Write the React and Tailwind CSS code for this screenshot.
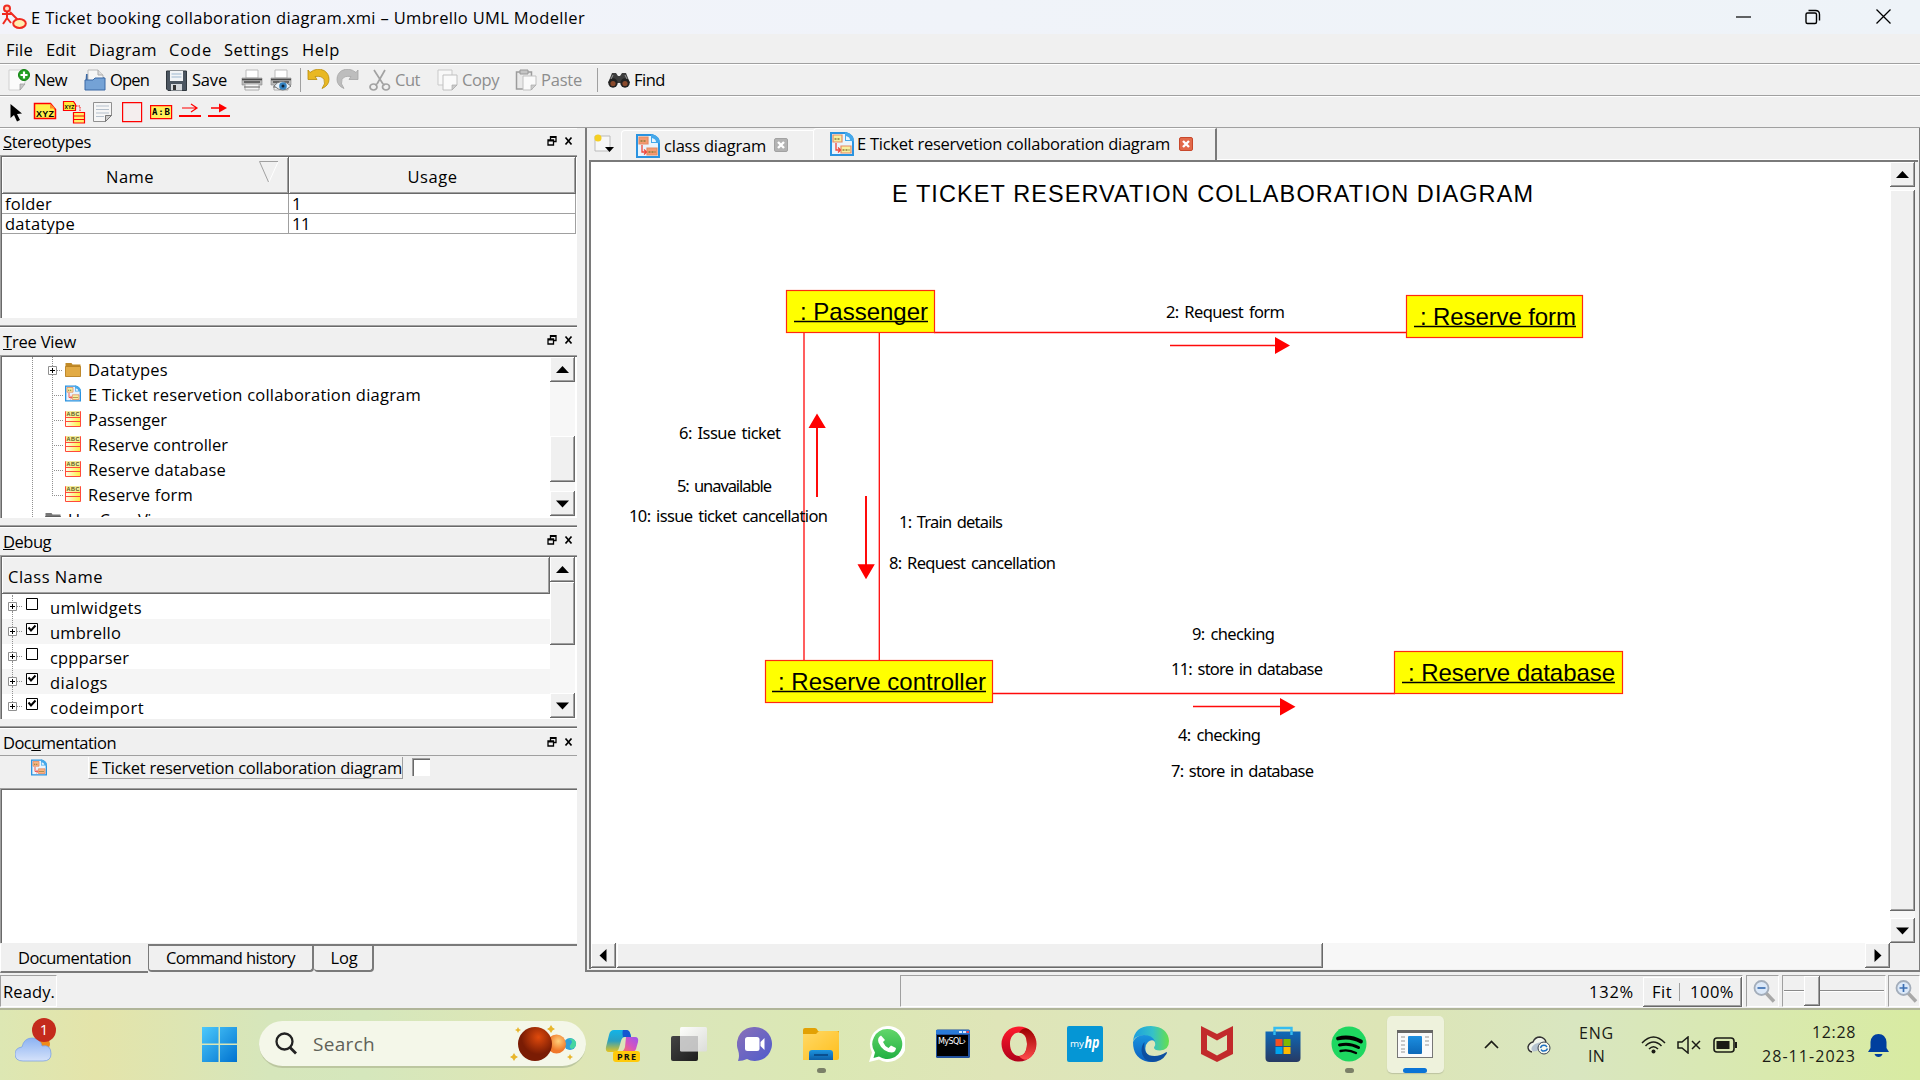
import React, { useLayoutEffect, useRef, useState } from "react";

const raised =
  "bg-[#f0f0f0] shadow-[inset_-1px_-1px_0_#696969,inset_1px_1px_0_#ffffff,inset_-2px_-2px_0_#a0a0a0]";
const sunken =
  "border-t border-l border-[#a0a0a0] shadow-[inset_1px_1px_0_#696969,inset_-1px_-1px_0_#ffffff]";
const well =
  "border-t border-l border-t-[#a0a0a0] border-l-[#a0a0a0] border-r border-b border-r-white border-b-white";

/* Spreads its text over the width that its class gives. */
function Fit({ className = "", children }) {
  const outer = useRef(null);
  const inner = useRef(null);
  const [space, setSpace] = useState(0);
  useLayoutEffect(() => {
    const n = inner.current.textContent.length;
    setSpace((outer.current.clientWidth - inner.current.getBoundingClientRect().width) / n);
  }, []);
  return (
    <span ref={outer} className={`inline-block shrink-0 whitespace-pre ${className}`}>
      <span ref={inner} style={{ letterSpacing: `${space}px` }}>{children}</span>
    </span>
  );
}

function Svg({ className, box, children }) {
  return (
    <svg className={`block shrink-0 ${className}`} viewBox={box} fill="none">
      {children}
    </svg>
  );
}

const Tri = ({ dir }) => (
  <Svg className="w-[25px] h-[25px]" box="0 0 25 25">
    <path
      fill="#000"
      d={{
        up: "M6 16h13L12.500 9z",
        down: "M6 9.500h13L12.500 16.500z",
        left: "M15.500 6v13L8.500 12.500z",
        right: "M9.500 6v13L16.500 12.500z",
      }[dir]}
    />
  </Svg>
);
const ScrollBtn = ({ dir, className = "" }) => (
  <div className={`h-[25px] w-[25px] shrink-0 ${raised} ${className}`}>
    <Tri dir={dir} />
  </div>
);

/* ---------- toolbar icons ---------- */
const AppIcon = () => (
  <Svg className="h-[26px] w-[26px]" box="0 0 26 26">
    <g stroke="#f02a20" strokeWidth="2">
      <circle cx="6" cy="4.500" r="3" fill="#ffd9c0" />
      <path d="M6 8v6M1 10h10M6 14l-4 6M6 14l4 5M9 8l8 8" />
      <ellipse cx="18.500" cy="19.500" rx="6.300" ry="4.500" fill="#ffeeb0" />
    </g>
  </Svg>
);
const NewIcon = () => (
  <Svg className="h-[22px] w-[22px]" box="0 0 22 22">
    <path d="M1 1h16v13l-5 7H1z" fill="#fbfbfb" stroke="#d0d0d0" />
    <path d="M12 21v-6h5z" fill="#c8c8c8" stroke="#999" strokeWidth=".7" />
    <circle cx="16" cy="6" r="5.500" fill="#22a022" stroke="#128012" />
    <path d="M16 2.500v7M12.500 6h7" stroke="#fff" strokeWidth="2.200" />
  </Svg>
);
const OpenIcon = () => (
  <Svg className="h-[22px] w-[22px]" box="0 0 22 22">
    <path d="M2 5h6l2 3h10v12H1z" fill="#3c6aa6" />
    <path d="M4 1h10l5 5v9H4z" fill="#f6f6f6" stroke="#b9b9b9" />
    <path d="M14 1v5h5" fill="#ddd" stroke="#aaa" />
    <path d="M1 11h8l2-2h10v12H1z" fill="#74a2d6" stroke="#3a68a5" />
  </Svg>
);
const SaveIcon = () => (
  <Svg className="h-[21px] w-[21px]" box="0 0 21 21">
    <path d="M.5 1h20v19.500H2L.500 19z" fill="#4b5560" stroke="#2f363d" />
    <path d="M4 1h13v10H4z" fill="#f2f4f6" />
    <path d="M5.500 4h10M5.500 7h10" stroke="#9db7cf" />
    <path d="M5 14h11v6.500H5z" fill="#d5d8dc" />
    <path d="M7 15h3v5H7z" fill="#333" />
  </Svg>
);
const PrintIcon = ({ eye }) => (
  <Svg className="h-[22px] w-[22px]" box="0 0 22 22">
    <path d="M5 1h12v8H5z" fill="#fff" stroke="#bbb" />
    <path d="M1 9h20v7H1z" fill="#b9b9b9" stroke="#888" strokeWidth=".6" />
    <path d="M1 10.500h20M3 13h16" stroke="#4a4a4a" strokeWidth="1.600" />
    <path d="M4 15h14v6H4z" fill="#f4f4f4" stroke="#aaa" />
    <path d="M3 18h16" stroke="#777" strokeWidth="1.200" />
    {eye && (
      <g>
        <path d="M4 17q7-9 17 0q-8 8-17 0z" fill="#e8f1f8" stroke="#777" />
        <circle cx="13" cy="17" r="3.800" fill="#3382c0" />
        <circle cx="13" cy="17" r="1.500" fill="#123" />
      </g>
    )}
  </Svg>
);
const UndoIcon = ({ redo }) => (
  <Svg className={redo ? "h-[20px] w-[23px] -scale-x-100" : "h-[20px] w-[23px]"} box="0 0 23 20">
    <path
      d="M1 1l2 2.500Q10-2 17 1.500q5 3 5 9t-7 9q4-5 2-9t-9-3l2 3H1z"
      fill={redo ? "#bdbdbd" : "#e9b822"}
      stroke={redo ? "#a5a5a5" : "#b98c08"}
      strokeWidth=".8"
    />
  </Svg>
);
const CutIcon = () => (
  <Svg className="h-[22px] w-[22px]" box="0 0 22 22">
    <g stroke="#a2a2a2" strokeWidth="1.700">
      <path d="M5 1l9 14M16 1L8 15" />
      <ellipse cx="4.500" cy="18" rx="3.500" ry="3" />
      <ellipse cx="17" cy="18" rx="3.500" ry="3" />
      <path d="M8 15l-2 1M14 15l2 1" />
    </g>
  </Svg>
);
const CopyIcon = () => (
  <Svg className="h-[22px] w-[21px]" box="0 0 21 22">
    <path d="M1 1h14v15H1z" fill="#f8f8f8" stroke="#c9c9c9" />
    <path d="M6 6h14v10l-5 5H6z" fill="#fafafa" stroke="#c0c0c0" />
    <path d="M15 21v-5h5z" fill="#ccc" stroke="#aaa" strokeWidth=".7" />
  </Svg>
);
const PasteIcon = () => (
  <Svg className="h-[22px] w-[22px]" box="0 0 22 22">
    <path d="M1.500 3h15v17h-15z" fill="#e9e9e9" stroke="#9c9c9c" strokeWidth="1.500" />
    <path d="M5 1h8v4H5z" fill="#c5c5c5" stroke="#999" />
    <path d="M8 7h13v9l-5 5H8z" fill="#fafafa" stroke="#c0c0c0" />
    <path d="M16 21v-5h5z" fill="#ccc" stroke="#aaa" strokeWidth=".7" />
  </Svg>
);
const FindIcon = () => (
  <Svg className="h-[16px] w-[22px]" box="0 0 22 16">
    <path d="M4 1h4l2 3h2l2-3h4l4 10H0z" fill="#3d3d3d" />
    <circle cx="5" cy="11" r="4.700" fill="#222" />
    <circle cx="17" cy="11" r="4.700" fill="#222" />
    <circle cx="5" cy="11.500" r="2.600" fill="#8a4a2c" />
    <circle cx="17" cy="11.500" r="2.600" fill="#8a4a2c" />
    <path d="M5 3l-2 4M17 3l2 4" stroke="#999" />
  </Svg>
);

/* ---------- tree and tab icons ---------- */
const DiagramIcon = ({ className, tone = "#f7efa0" }) => (
  <Svg className={className} box="0 0 24 24">
    <path d="M1 1h15q7 2 7 9v13H1z" fill="#e9f4fd" stroke="#2a93e0" strokeWidth="2" />
    <path d="M15 0v9h9q0-7-9-9z" fill="#45a8ea" />
    <path d="M16 4q4 1 4 4h-4z" fill="#e9f4fd" />
    <path d="M3 3h9v7H3zM11 14h10v7H11z" fill={tone} stroke="#e58a63" strokeWidth="1.200" />
    <path d="M4.500 7h6M12.500 18h7" stroke="#8b7c3a" strokeWidth="1.600" strokeDasharray="2 1" />
    <path d="M6 11v7h4M8 15.500l2.500 2.500L8 20.500" stroke="#f2473b" strokeWidth="1.300" />
  </Svg>
);
const ObjIcon = () => (
  <Svg className="h-[16px] w-[16px]" box="0 0 16 16">
    <defs>
      <linearGradient id="objFill">
        <stop offset="0" stopColor="#fffdf0" />
        <stop offset="1" stopColor="#ffee3a" />
      </linearGradient>
    </defs>
    <path d="M.5.500h15v15H.500z" fill="url(#objFill)" stroke="#ff4a3a" />
    <path d="M1 0h14v5.500H1z" fill="#f3ea9a" />
    <path d="M0 6.500h16M0 10.500h16" stroke="#ff4a3a" strokeWidth="1.200" />
    <text x="1.500" y="5" fontSize="5.500" textLength="13" fontWeight="700" fontFamily="Liberation Sans" fill="#5d5a20">ABC</text>
  </Svg>
);
const FolderIcon = ({ gray }) => (
  <Svg className="h-[16px] w-[16px]" box="0 0 16 16">
    <path d="M.5 1h6l1 1.500h8v12H.500z" fill={gray ? "#777" : "#c08a28"} />
    <path d="M.5 4.500h15v10H.500z" fill={gray ? "#999" : "#e2ab45"} stroke={gray ? "#555" : "#b57d1e"} strokeWidth=".8" />
  </Svg>
);

const DockButtons = () => (
  <Svg className="h-[10px] w-[26px]" box="0 0 26 10">
    <path d="M3.500 4V.500h5.500v5H7M3 1.300h6M1 4h5.500v5H1zM.500 4.800h6.500" stroke="#000" strokeWidth="1.300" />
    <path d="M18.500 1.500l6 7M24.500 1.500l-6 7" stroke="#000" strokeWidth="1.700" />
  </Svg>
);
const DockTitle = ({ children, className = "h-[28px]" }) => (
  <div className={`flex shrink-0 items-center justify-between border-t border-white pl-[3px] pr-[4px] ${className}`}>
    {children}
    <div className="pb-[3px]"><DockButtons /></div>
  </div>
);
const Splitter = () => (
  <div className="flex h-[9px] shrink-0 flex-col justify-end">
    <div className="h-px bg-[#a0a0a0]" />
    <div className="h-px bg-[#696969]" />
  </div>
);
const Plus = () => (
  <Svg className="h-[9px] w-[9px]" box="0 0 9 9">
    <path d="M.5.500h8v8h-8z" fill="#fff" stroke="#909090" />
    <path d="M2 4.500h5M4.500 2v5" stroke="#000" />
  </Svg>
);

function TreeRow({ icon, children }) {
  return (
    <div className="flex h-[25px] items-center pt-px">
      <span className="ml-[52px] w-[9px] border-t border-dotted border-[#909090]" />
      <span className="ml-[2px] mr-[7px] pb-[3px]">{icon}</span>
      {children}
    </div>
  );
}

function DebugRow({ on, odd, children }) {
  return (
    <div className={`flex h-[25px] shrink-0 items-center pl-[6px] ${odd ? "bg-[#f5f5f5]" : "bg-white"}`}>
      <span><Plus /></span>
      <span className="w-[5px] border-t border-dotted border-[#909090]" />
      <span className="mb-[5px] ml-[4px] mr-[12px]">
        <Svg className="h-[12px] w-[12px]" box="0 0 12 12">
          <path d="M.5.500h11v11H.500z" fill="#fff" stroke="#000" />
          {on && <path d="M2.500 4.500l2.500 3 4.500-5" stroke="#000" strokeWidth="2" />}
        </Svg>
      </span>
      <span className="pt-[2px]">{children}</span>
    </div>
  );
}

/* ---------- diagram ---------- */
const messages = [
  [1166, 318, 119, "2: Request form"],
  [679, 439, 102, "6: Issue ticket"],
  [677, 492, 95, "5: unavailable"],
  [629, 522, 199, "10: issue ticket cancellation"],
  [899, 528, 104, "1: Train details"],
  [889, 569, 167, "8: Request cancellation"],
  [1192, 640, 83, "9: checking"],
  [1171, 675, 152, "11: store in database"],
  [1178, 741, 83, "4: checking"],
  [1171, 777, 143, "7: store in database"],
];
const objects = [
  [786.5, 290.5, 148, 42, 794, 134, "Passenger"],
  [1406.5, 295.5, 176, 42, 1414, 162, "Reserve form"],
  [765.5, 660.5, 227, 42, 772, 214, "Reserve controller"],
  [1394.5, 651.5, 228, 42, 1402, 213, "Reserve database"],
];
const Diagram = () => (
  <svg className="block h-full w-full" viewBox="591 162 1299 781">
    <text x="892" y="202" fontSize="23.500" textLength="641" fontFamily="Liberation Sans">
      E TICKET RESERVATION COLLABORATION DIAGRAM
    </text>
    <g stroke="#ff0a0a" strokeWidth="1.300">
      <path d="M804 332V661M879.300 332V661M934 332.500H1407M992 693.500H1395" />
      <path d="M1170 345.500H1276M1193 706.500H1281" />
      <path d="M817 427V497M866 496V565" strokeWidth="2" />
    </g>
    <path
      fill="#ff0000"
      d="M1275 337V354L1290 345.500zM1280 698V715.500L1295.500 706.700zM808.500 428H825.800L817 413.500zM857.500 564.300H874.800L866 579.300z"
    />
    {objects.map(([x, y, w, h, tx, tw, name]) => (
      <g key={name}>
        <rect x={x} y={y} width={w} height={h} fill="#ffff00" stroke="#ff2a10" strokeWidth="1.200" />
        <text x={tx + 6} y={y + 29.5} fontSize="24" textLength={tw - 6} fontFamily="Liberation Sans">
          : {name}
        </text>
        <path d={`M${tx} ${y + 31}h${tw}`} stroke="#000" strokeWidth="1.300" />
      </g>
    ))}
    {messages.map(([x, y, w, text]) => (
      <text key={text} x={x} y={y} fontSize="16.500" textLength={w} wordSpacing="2" fontFamily="Noto Sans">
        {text}
      </text>
    ))}
  </svg>
);

const ZoomGlass = ({ plus }) => (
  <Svg className="h-[23px] w-[23px]" box="0 0 23 23">
    <path d="M13 13l8 8.500" stroke="#a8a8a8" strokeWidth="3.500" />
    <circle cx="8.500" cy="8" r="7" fill="#dbe8f8" stroke="#a3adba" strokeWidth="1.800" />
    <path d={plus ? "M4.500 8h8M8.500 4v8" : "M4.500 8h8"} stroke="#3d6fb3" strokeWidth="1.700" />
  </Svg>
);

/* ---------- taskbar icons ---------- */
const G = ({ id, a, b, x2 = 1, y2 = 1 }) => (
  <linearGradient id={id} x1="0" y1="0" x2={x2} y2={y2}>
    <stop offset="0" stopColor={a} />
    <stop offset="1" stopColor={b} />
  </linearGradient>
);
const taskIcons = [
  <g>
    <defs>
      <linearGradient id="cp1" x1="0" y1="0" x2="0" y2="1"><stop offset="0" stopColor="#12b4e8" /><stop offset=".5" stopColor="#2b9fc0" /><stop offset="1" stopColor="#e8c51c" /></linearGradient>
      <linearGradient id="cp2" x1="1" y1="0" x2="0" y2="1"><stop offset="0" stopColor="#9a55ee" /><stop offset=".5" stopColor="#d554c0" /><stop offset="1" stopColor="#ff7a55" /></linearGradient>
    </defs>
    <path d="M9 4h12q4 0 5 7h-6q-3 0-4 4l-2 7q-1 4-5 4H4q-4 0-3-5l3-12q1-5 5-5z" fill="url(#cp1)" />
    <path d="M18 4h4q3 0 4 7h-8q-1-5 0-7z" fill="#1457d0" />
    <path d="M21 11h9q4 0 3 5l-2 7q-1 3-5 3H16q3-1 4-5z" fill="url(#cp2)" />
    <rect x="8" y="25" width="27" height="11" rx="3" fill="#ffca0a" />
    <text x="12" y="33.700" fontSize="9" textLength="19" fontWeight="700" fontFamily="Open Sans" fill="#111">PRE</text>
  </g>,
  <g>
    <defs><G id="tv1" a="#444" b="#1d1d1d" /><G id="tv2" a="#ffffff" b="#dcdcdc" /></defs>
    <rect x="0" y="10" width="27" height="25" rx="2" fill="url(#tv1)" />
    <rect x="9" y="1" width="27" height="24.500" rx="1.500" fill="url(#tv2)" opacity=".94" />
    <path d="M9 10h18v15H9z" fill="#bdbdbd" opacity=".8" />
  </g>,
  <g>
    <defs><G id="ch" a="#8a70b8" b="#4f5ccc" /></defs>
    <path d="M18 1a17 17 0 1 1-8 32q-4 2-9 2 2-5 0-11A17 17 0 0 1 18 1z" fill="url(#ch)" />
    <rect x="8" y="11" width="14.500" height="14" rx="2.500" fill="#fff" />
    <path d="M23.500 16l4-4v12l-4-4z" fill="#fff" />
  </g>,
  <g>
    <defs><G id="fd" a="#ffd966" b="#ffbe1c" /><G id="fb" a="#1c95e0" b="#0d5fa8" x2={0} /></defs>
    <path d="M0 4q0-2 2-2h10q2 0 3 3H36v8H0z" fill="#e2a104" />
    <path d="M0 8h13l3-3h18q2 0 2 2v25q0 2-2 2H0z" fill="url(#fd)" />
    <path d="M6 34v-7q0-3 3-3h18q3 0 3 3v7z" fill="url(#fb)" />
    <path d="M11 29h14" stroke="#0a4f8f" strokeWidth="2" />
  </g>,
  <g>
    <defs><G id="wa" a="#62d66a" b="#22b043" x2={0} /></defs>
    <path d="M18 0a18 18 0 1 1-8 33.500L0 36l3-9.500A18 18 0 0 1 18 0z" fill="#fff" />
    <path d="M18 3a15 15 0 1 1-8 27.500L4.500 32l1.500-5.500A15 15 0 0 1 18 3z" fill="url(#wa)" />
    <path d="M12 9.500q-4 2-2.500 7 4 9 13 10 4 0 4.500-4.500l-5-2.500-2.500 2.500q-4-2-5.500-6l2-2z" fill="#fff" />
  </g>,
  <g>
    <rect x="1" y="3.500" width="34" height="28.500" rx="1.500" fill="#21509b" />
    <path d="M1 4h34v4H1z" fill="#2a7ad8" />
    <path d="M24 5h3v2h-3zM28 5h3v2h-3z" fill="#d5e6fa" /><path d="M31.500 5h2.500v2h-2.500z" fill="#e45" />
    <path d="M2 9h31v21H2z" fill="#000" />
    <text x="3" y="17.500" fontSize="8" textLength="28" fontFamily="DejaVu Sans" fill="#fff">MySQL›</text>
  </g>,
  <g>
    <defs><G id="op" a="#ff1b2d" b="#b0001a" x2={0} /><G id="oq" a="#9c0000" b="#ff4b4b" x2={0} /></defs>
    <path fillRule="evenodd" d="M18 .500a17.500 17.500 0 1 0 0 35 17.500 17.500 0 0 0 0-35zM18 6.500c5 0 8 5 8 11.500s-3 12-8 12-9-5-9-12 4-11.500 9-11.500z" fill="url(#op)" />
    <path d="M18 6.500Q24-1 30 5q5 5 5 13t-5 13q-6 6-12-1 8-1 8-12T18 6.500z" fill="url(#oq)" />
  </g>,
  <g>
    <rect width="36" height="36" rx="2" fill="#0596d5" />
    <text x="3" y="21" fontSize="9.500" textLength="14" lengthAdjust="spacingAndGlyphs" fontFamily="Open Sans" fill="#fff">my</text>
    <text x="17.500" y="22" fontSize="16" textLength="15" lengthAdjust="spacingAndGlyphs" fontWeight="700" fontStyle="italic" fontFamily="Open Sans" fill="#fff">hp</text>
  </g>,
  <g>
    <defs>
      <linearGradient id="ed1"><stop offset="0" stopColor="#1a9ee0" /><stop offset=".55" stopColor="#35c1c8" /><stop offset="1" stopColor="#66e04b" /></linearGradient>
      <G id="ed2" a="#1a94de" b="#0a5fc0" x2={0} />
    </defs>
    <path d="M0 16Q1 0 18 0q17 1 18 15 0 9-9 9.500-6 0-6-3 2-2 1-5-3-7-12-7T0 16z" fill="url(#ed1)" />
    <path d="M0 16Q3 9 11 9q8 0 11 6-4-2-7 1-4 4-2 10 3 9 11 9-6 2-12 0Q0 31 0 16z" fill="url(#ed2)" />
    <path d="M11.500 16q-2 14 10 14 6 0 12-4 1 0 0 2-5 8-14 8-10-1-11-11 0-6 3-9z" fill="#0d4fa0" />
  </g>,
  <g>
    <path fillRule="evenodd" d="M2 0l16 8L34 0v28l-16 8-16-8zM8 9v15l10 5.500L28 24V9l-10 5.500z" fill="#c22a2b" />
  </g>,
  <g>
    <defs><G id="st" a="#0f69b8" b="#273a63" x2={0} /></defs>
    <path d="M9.500 8V2h17v6" stroke="#35bdf0" strokeWidth="2.400" />
    <path d="M.5 5.500h35V32q0 4-4 4h-27q-4 0-4-4z" fill="url(#st)" />
    <path d="M9.500 9V5.500M26.500 9V5.500" stroke="#35bdf0" strokeWidth="2.400" />
    <path d="M10.500 13h7v7h-7z" fill="#f25022" /><path d="M18.500 13h7v7h-7z" fill="#7fba00" />
    <path d="M10.500 21h7v7h-7z" fill="#00a4ef" /><path d="M18.500 21h7v7h-7z" fill="#ffb900" />
  </g>,
  <g>
    <circle cx="18" cy="18" r="17.500" fill="#1ed760" />
    <g stroke="#000" strokeLinecap="round"><path d="M7 12.500q12-3 23 3" strokeWidth="3.800" /><path d="M8.500 19q10-2.500 19 2.500" strokeWidth="3" /><path d="M9.500 25q8-2 15.500 2" strokeWidth="2.400" /></g>
  </g>,
  <g>
    <rect x=".5" y="4.500" width="35" height="27" fill="#fafafa" stroke="#777" />
    <path d="M0 4h36v3H0z" fill="#666" />
    <defs><G id="wn" a="#1c8ee0" b="#0c68b8" x2={0} /></defs>
    <rect x="11" y="10" width="14" height="18" rx="1" fill="url(#wn)" />
    <path d="M4 11h4M4 15h4M4 19h4M4 23h4M4 26h4M28 11h4M28 15h4M28 19h4" stroke="#c8c8c8" strokeWidth="2" />
  </g>,
];

function Taskbar() {
  return (
    <div className="flex h-[72px] shrink-0 border-t-2 border-[#b0b599] bg-[linear-gradient(90deg,#dde7b3_0%,#e4e4aa_5%,#d6e6bb_14%,#d5e7bc_19%,#dfe6b4_29%,#dbe6bb_34%,#dbe8b4_43%,#dfe5b8_52%,#dce6bb_62%,#dde5b6_72%,#d9e6c0_82%,#d9e9ae_92%,#d8eba2_100%)]">
      <div className="w-[202px] pl-[15px] pt-[8px]">
        <Svg className="h-[46px] w-[42px]" box="0 0 42 46">
          <defs><G id="cloud" a="#8bb2f2" b="#d5e2fa" x2={0} /></defs>
          <circle cx="29" cy="26" r="6" fill="#f08a1a" />
          <path d="M8 43q-8 0-8-7 0-6 7-7 2-9 10-9t10 8q9-2 9 8 0 7-8 7z" fill="url(#cloud)" stroke="#7da2e6" strokeWidth=".8" />
          <circle cx="29" cy="12" r="12" fill="#c42b1c" />
          <text x="29" y="17" textAnchor="middle" fontSize="15" fontFamily="Open Sans" fill="#fff">1</text>
        </Svg>
      </div>
      <div className="w-[57px] pt-[17px]">
        <Svg className="h-[35px] w-[35px]" box="0 0 35 35">
          <defs><G id="win" a="#4cc9fb" b="#0072d0" /></defs>
          <path d="M0 0h16.500v16.500H0zM18 0h17v16.500H18zM0 18h16.500v17H0zM18 18h17v17H18z" fill="url(#win)" />
        </Svg>
      </div>
      <div className="mt-[11px] flex h-[47px] w-[327px] items-center rounded-full border-b-2 border-[#bcc7a0] bg-[#f4f7e9] pl-[16px]">
        <Svg className="h-[23px] w-[23px]" box="0 0 23 23">
          <circle cx="9.500" cy="9.500" r="8" stroke="#222" strokeWidth="2.300" />
          <path d="M15 15.500l6 6" stroke="#222" strokeWidth="2.800" />
        </Svg>
        <Fit className="ml-[15px] w-[62px] pt-px text-[19px] text-[#5f6158]">Search</Fit>
        <Svg className="ml-[135px] h-[38px] w-[68px]" box="0 0 68 38">
          <defs>
            <radialGradient id="mars" cx=".6" cy=".3"><stop offset="0" stopColor="#e04a0c" /><stop offset="1" stopColor="#7a1c04" /></radialGradient>
            <radialGradient id="ven" cx=".6" cy=".35"><stop offset="0" stopColor="#ffcf7a" /><stop offset="1" stopColor="#f0782a" /></radialGradient>
          </defs>
          <circle cx="60" cy="19" r="6" fill="#2f9fd8" /><path d="M58 14q6 1 3 5t1 5q5-2 4-7-3-5-8-3z" fill="#46d6a0" />
          <circle cx="46.500" cy="19" r="9.500" fill="url(#ven)" />
          <circle cx="25" cy="19" r="17" fill="url(#mars)" />
          <path d="M41 0l1.500 2.500L45 4l-2.500 1.500L41 8l-1.500-2.500L37 4l2.500-1.500zM8 2l1 2 2 1-2 1-1 2-1-2-2-1 2-1zM4 28l1.500 2.500L8 32l-2.500 1.500L4 36l-1.500-2.500L0 32l2.500-1.500zM60 29l1 2 2 1-2 1-1 2-1-2-2-1 2-1z" fill="#e8b62c" />
        </Svg>
      </div>
      <div className="ml-[4px] flex">
        {taskIcons.map((icon, i) => (
          <div key={i} className="flex w-[66px] justify-center pt-[6px]">
            <div className={`flex h-[57px] w-[57px] flex-col items-center rounded-[5px] pt-[10px] ${i === 12 ? "bg-[#eef2dc] shadow-[0_1px_1px_#bcc3a0]" : ""}`}>
              <Svg className="h-[36px] w-[36px]" box="0 0 36 36">{icon}</Svg>
              {i === 12 && <span className="mt-[6px] h-[5px] w-[24px] rounded-full bg-[#0a74d6]" />}
              {(i === 3 || i === 11) && <span className="mt-[6px] h-[5px] w-[9px] rounded-full bg-[#7b8068]" />}
            </div>
          </div>
        ))}
      </div>
      <div className="flex h-[70px] flex-1 items-center text-[16px] text-[#1b1c16]">
        <Svg className="ml-[36px] mb-px h-[9px] w-[15px]" box="0 0 15 9"><path d="M1 8l6.500-6.500L14 8" stroke="#1b1c16" strokeWidth="1.700" /></Svg>
        <Svg className="ml-[28px] h-[20px] w-[25px]" box="0 0 25 20">
          <path d="M5 17q-4-1-4-5 1-4 5-5 2-5 7-5 5 1 6 5" stroke="#333" strokeWidth="1.400" fill="#f0f4ea" />
          <path d="M6 16.500Q2 13 8 9q6-3 10-1l-8 8z" fill="#b5c3cf" />
          <circle cx="17" cy="13" r="6" fill="#f7f9ef" stroke="#3c4450" />
          <path d="M13.500 13q1-3.500 5-2.500l1.500 1.500M20.500 13.500q-1 3-5 2.500L14 14.500" stroke="#1d6fc0" strokeWidth="1.400" />
        </Svg>
        <div className="ml-[27px] flex w-[35px] flex-col items-center leading-[23px]">
          <Fit className="w-[35px]">ENG</Fit>
          <Fit className="w-[17px]">IN</Fit>
        </div>
        <Svg className="ml-[27px] h-[18px] w-[25px]" box="0 0 25 18">
          <g stroke="#1b1c16" strokeWidth="1.500"><path d="M1 7q11.500-12 23 0M4.500 10q8-8 16 0M8 13q4.500-4.500 9 0" /></g>
          <circle cx="12.500" cy="15.500" r="2" fill="#1b1c16" />
        </Svg>
        <Svg className="ml-[11px] h-[18px] w-[24px]" box="0 0 24 18">
          <path d="M1 6h4l6-5v16l-6-5H1zM15 5l8 8M23 5l-8 8" stroke="#1b1c16" strokeWidth="1.500" />
        </Svg>
        <Svg className="ml-[12px] h-[16px] w-[25px]" box="0 0 25 16">
          <rect x="1" y="1" width="20" height="14" rx="3" stroke="#1b1c16" strokeWidth="1.600" />
          <path d="M3.500 4h13v8h-13z" fill="#1b1c16" /><path d="M22 5h2v6h-2z" fill="#1b1c16" />
        </Svg>
        <div className="mb-[2px] ml-[24px] flex w-[94px] flex-col items-end leading-[24px]">
          <Fit className="w-[44px]">12:28</Fit>
          <Fit className="w-[94px]">28-11-2023</Fit>
        </div>
        <Svg className="ml-[12px] h-[23px] w-[21px]" box="0 0 21 23">
          <path d="M0 18l2.500-4V8q1-8 8-8t8 8v6l2.500 4zM6.500 20h8q-1 3-4 3t-4-3z" fill="#003f9e" />
        </Svg>
      </div>
    </div>
  );
}

const CloseTab = ({ red }) => (
  <Svg className="h-[14px] w-[14px]" box="0 0 14 14">
    <rect x=".5" y=".5" width="13" height="13" rx="1.500" fill={red ? "#e2694a" : "#b3b3b3"} stroke={red ? "#c8482c" : "#a2a2a2"} />
    <path d="M4 4l6 6M10 4l-6 6" stroke="#fff" strokeWidth="2.400" />
  </Svg>
);

function LeftDocks() {
  return (
    <div className="flex w-[577px] shrink-0 flex-col">
      <DockTitle className="h-[27px]"><Fit className="w-[88px]"><u>S</u>tereotypes</Fit></DockTitle>
      <div className={`h-[163px] shrink-0 bg-white pl-px pt-px ${sunken}`}>
        <div className="grid w-[574px] grid-cols-2">
          <div className={`flex h-[37px] items-center pt-[2px] ${raised}`}>
            <Fit className="ml-[104px] w-[48px]">Name</Fit>
            <Svg className="mb-[9px] ml-[105px] h-[22px] w-[20px]" box="0 0 20 22">
              <path d="M19 1l-9 20" stroke="#fff" /><path d="M19 .500H.500L9.500 21" stroke="#a0a0a0" />
            </Svg>
          </div>
          <div className={`flex h-[37px] items-center justify-center pt-[2px] ${raised}`}><Fit className="w-[50px]">Usage</Fit></div>
          {["folder", "1", "datatype", "11"].map((t, i) => (
            <div key={t} className="flex h-[20px] items-center border-b border-r border-[#a0a0a0] pl-[3px] pt-px">
              <Fit className={["w-[47px]", "w-[9px]", "w-[70px]", "w-[18px]"][i]}>{t}</Fit>
            </div>
          ))}
        </div>
      </div>
      <Splitter />

      <DockTitle><Fit className="w-[73px]"><u>T</u>ree View</Fit></DockTitle>
      <div className={`flex h-[163px] shrink-0 justify-between overflow-hidden bg-white py-px pl-px pr-[2px] ${sunken}`}>
        <div className="relative h-[160px] flex-1 overflow-hidden">
          <div className="absolute left-[30px] top-0 h-[160px] border-l border-dotted border-[#909090]" />
          <div className="absolute left-[50px] top-0 h-[139px] border-l border-dotted border-[#909090]" />
          <div className="relative flex h-[25px] items-center pt-px">
            <span className="ml-[46px]"><Plus /></span>
            <span className="w-[5px] border-t border-dotted border-[#909090]" />
            <span className="ml-[3px] mr-[7px]"><FolderIcon /></span>
            <Fit className="w-[80px]">Datatypes</Fit>
          </div>
          <TreeRow icon={<DiagramIcon className="h-[17px] w-[16px]" />}><Fit className="w-[333px]">E Ticket reservetion collaboration diagram</Fit></TreeRow>
          <TreeRow icon={<ObjIcon />}><Fit className="w-[79px]">Passenger</Fit></TreeRow>
          <TreeRow icon={<ObjIcon />}><Fit className="w-[140px]">Reserve controller</Fit></TreeRow>
          <TreeRow icon={<ObjIcon />}><Fit className="w-[138px]">Reserve database</Fit></TreeRow>
          <TreeRow icon={<ObjIcon />}><Fit className="w-[105px]">Reserve form</Fit></TreeRow>
          <div className="flex h-[25px] items-center pl-[43px]">
            <FolderIcon gray />
            <Fit className="ml-[7px] w-[104px]">Use Case View</Fit>
          </div>
        </div>
        <div className="flex w-[25px] flex-col bg-[#f7f7f7]">
          <ScrollBtn dir="up" />
          <div className={`mt-[54px] h-[46px] ${raised}`} />
          <ScrollBtn dir="down" className="mt-[9px]" />
        </div>
      </div>
      <Splitter />

      <DockTitle><Fit className="w-[48px]"><u>D</u>ebug</Fit></DockTitle>
      <div className={`flex h-[164px] shrink-0 overflow-hidden bg-white py-px pl-px pr-[2px] ${sunken}`}>
        <div className="relative flex h-[161px] flex-1 flex-col overflow-hidden">
          <div className={`flex h-[37px] shrink-0 items-center pl-[6px] pt-[2px] ${raised}`}><Fit className="w-[95px]">Class Name</Fit></div>
          <DebugRow><Fit className="w-[92px]">umlwidgets</Fit></DebugRow>
          <DebugRow odd on><Fit className="w-[71px]">umbrello</Fit></DebugRow>
          <DebugRow><Fit className="w-[79px]">cppparser</Fit></DebugRow>
          <DebugRow odd on><Fit className="w-[58px]">dialogs</Fit></DebugRow>
          <DebugRow on><Fit className="w-[94px]">codeimport</Fit></DebugRow>
          <div className="absolute left-[10px] top-[38px] h-[6px] border-l border-dotted border-[#909090]" />
          {["top-[54px]", "top-[79px]", "top-[104px]", "top-[129px]"].map((top) => (
            <div key={top} className={`absolute left-[10px] h-[16px] border-l border-dotted border-[#909090] ${top}`} />
          ))}
        </div>
        <div className="flex w-[25px] flex-col bg-[#f7f7f7]">
          <ScrollBtn dir="up" />
          <div className={`h-[63px] ${raised}`} />
          <ScrollBtn dir="down" className="mt-auto" />
        </div>
      </div>
      <Splitter />

      <DockTitle className="h-[27px] pt-[2px]"><Fit className="w-[113px]">Doc<u>u</u>mentation</Fit></DockTitle>
      <div className="flex h-[33px] shrink-0 items-start border-t border-[#a0a0a0]">
        <div className="ml-[31px] mt-[3px]"><DiagramIcon className="h-[17px] w-[16px]" tone="#f7b583" /></div>
        <div className="ml-[41px] mt-px flex h-[22px] w-[315px] items-center border-b border-l border-r border-b-[#a0a0a0] border-l-white border-r-[#a0a0a0]">
          <Fit className="w-[313px]">E Ticket reservetion collaboration diagram</Fit>
        </div>
        <div className={`ml-[9px] mt-[2px] h-[18px] w-[18px] bg-white ${sunken}`} />
      </div>
      <div className={`h-[155px] shrink-0 bg-white ${sunken}`} />
      <div className="flex h-[30px] shrink-0 items-start pt-px">
        <div className="flex h-[29px] w-[148px] items-center justify-center border-b-2 border-l border-b-[#7a7a7a] border-l-white"><Fit className="w-[113px]">Documentation</Fit></div>
        <div className="flex h-[29px] flex-1 border-t-2 border-[#7a7a7a]">
          <div className="flex h-[26px] w-[166px] items-center justify-center rounded-b-sm border-b-2 border-l border-r-2 border-[#7a7a7a]"><Fit className="w-[129px]">Command history</Fit></div>
          <div className="flex h-[26px] w-[60px] items-center justify-center rounded-b-sm border-b-2 border-r-2 border-[#7a7a7a] pl-[2px]"><Fit className="w-[27px]">Log</Fit></div>
        </div>
      </div>
    </div>
  );
}

function Editor() {
  return (
    <div className="mb-px ml-[8px] flex min-w-0 flex-1 flex-col border-b-2 border-l-2 border-r border-[#7c7c7c]">
      <div className="flex h-[32px] shrink-0">
        <Svg className="ml-[7px] mt-[6px] h-[19px] w-[21px]" box="0 0 21 19">
          <path d="M1 2h15v15H1z" fill="#f7f7f7" stroke="#bbb" />
          <circle cx="4" cy="4" r="3.500" fill="#f5cf22" />
          <path d="M11 13h9l-4.500 5z" fill="#000" />
        </Svg>
        <div className="ml-[6px] mt-[2px] flex w-[192px] items-center rounded-tl-sm border-l border-t border-white pl-[14px]">
          <DiagramIcon className="h-[24px] w-[24px]" tone="#f59a70" />
          <Fit className="ml-[4px] w-[102px]">class diagram</Fit>
          <span className="ml-[8px] pb-px"><CloseTab /></span>
        </div>
        <div className="flex w-[404px] items-center rounded-tl-sm border-l border-r-2 border-t border-l-white border-r-[#7a7a7a] border-t-white pb-px pl-[16px]">
          <DiagramIcon className="h-[24px] w-[24px]" />
          <Fit className="ml-[3px] w-[313px]">E Ticket reservetion collaboration diagram</Fit>
          <span className="ml-[9px]"><CloseTab red /></span>
        </div>
        <div className="flex-1 border-b border-white" />
      </div>
      <div className="mb-px ml-[2px] mr-px flex min-h-0 flex-1 flex-col border-l-2 border-t-2 border-[#7a7a7a] bg-[#f0f0f0]">
        <div className="flex h-[781px]">
          <div className="h-[781px] w-[1299px] bg-white"><Diagram /></div>
          <div className="flex w-[25px] flex-col bg-[#f7f7f7]">
            <ScrollBtn dir="up" />
            <div className={`mt-[3px] h-[721px] ${raised}`} />
            <ScrollBtn dir="down" className="mt-auto" />
          </div>
        </div>
        <div className="flex h-[26px] w-[1299px] bg-[#f7f7f7]">
          <ScrollBtn dir="left" />
          <div className={`ml-px h-[25px] w-[706px] ${raised}`} />
          <ScrollBtn dir="right" className="ml-auto" />
        </div>
      </div>
    </div>
  );
}

export default function App() {
  return (
    <div className="flex h-[1080px] w-[1920px] flex-col overflow-hidden bg-[#f0f0f0] font-['Open_Sans','Noto_Sans',sans-serif] text-[16.5px] leading-[22px] text-black">
      <div className="flex h-[34px] shrink-0 items-center bg-[linear-gradient(90deg,#f2f3fa,#eef3f8)] pl-px">
        <AppIcon />
        <Fit className="ml-[4px] w-[554px] pt-px">E Ticket booking collaboration diagram.xmi – Umbrello UML Modeller</Fit>
        <Svg className="ml-auto mr-[28px] h-[16px] w-[156px]" box="0 0 156 16">
          <path d="M0 8h15" stroke="#000" strokeWidth="1.200" />
          <rect x="70" y="4" width="10.500" height="10.500" rx="1.500" stroke="#000" strokeWidth="1.400" />
          <path d="M72.500 1.500h7q4 0 4 4v6" stroke="#000" strokeWidth="1.400" />
          <path d="M140.500 .500l14 14M154.500 .500l-14 14" stroke="#000" strokeWidth="1.300" />
        </Svg>
      </div>
      <div className="flex h-[30px] shrink-0 items-center border-b border-[#a0a0a0] pl-[6px] pt-[2px]">
        <Fit className="w-[27px]">File</Fit>
        <Fit className="ml-[13px] w-[30px]">Edit</Fit>
        <Fit className="ml-[13px] w-[68px]">Diagram</Fit>
        <Fit className="ml-[12px] w-[43px]">Code</Fit>
        <Fit className="ml-[12px] w-[65px]">Settings</Fit>
        <Fit className="ml-[13px] w-[38px]">Help</Fit>
      </div>
      <div className="flex h-[32px] shrink-0 items-center border-b border-t border-b-[#a0a0a0] border-t-white pl-[8px]">
        <NewIcon /><Fit className="ml-[4px] w-[33px]">New</Fit>
        <span className="ml-[17px]"><OpenIcon /></span><Fit className="ml-[4px] w-[39px]">Open</Fit>
        <span className="ml-[17px]"><SaveIcon /></span><Fit className="ml-[5px] w-[35px]">Save</Fit>
        <span className="ml-[14px]"><PrintIcon /></span>
        <span className="ml-[7px]"><PrintIcon eye /></span>
        <span className="ml-[8px] h-[24px] w-px bg-[#a0a0a0]" />
        <span className="mb-[3px] ml-[6px]"><UndoIcon /></span>
        <span className="mb-[3px] ml-[6px]"><UndoIcon redo /></span>
        <span className="ml-[10px]"><CutIcon /></span><Fit className="ml-[4px] w-[25px] text-[#8d8d8d]">Cut</Fit>
        <span className="ml-[17px]"><CopyIcon /></span><Fit className="ml-[4px] w-[37px] text-[#8d8d8d]">Copy</Fit>
        <span className="ml-[16px]"><PasteIcon /></span><Fit className="ml-[4px] w-[41px] text-[#8d8d8d]">Paste</Fit>
        <span className="ml-[15px] h-[24px] w-px bg-[#a0a0a0]" />
        <span className="ml-[10px]"><FindIcon /></span><Fit className="ml-[4px] w-[31px]">Find</Fit>
      </div>
      <div className="flex h-[32px] shrink-0 items-center border-b border-t border-b-[#a0a0a0] border-t-white pl-[10px]">
        <Svg className="h-[24px] w-[221px]" box="10 100 221 24">
          <path d="M10.500 104v14l3.500-3 3 6.500 3-1.500-3-6 5-.500z" fill="#000" />
          <path d="M34.500 103.500h16l5 6v9h-21z" fill="#fff04a" stroke="#f00" strokeWidth="1.500" /><path d="M50 103.500v5h5.500z" fill="#ff8c2a" />
          <text x="36" y="117" fontSize="9" fontWeight="700" textLength="18" fill="#000" fontFamily="Liberation Sans">XYZ</text>
          <path d="M63.500 101.500h10l2 3v6h-12z" fill="#ffe93a" stroke="#f00" strokeWidth="1.200" /><text x="64.500" y="109" fontSize="6" fontWeight="700" textLength="10" lengthAdjust="spacingAndGlyphs" fill="#000" fontFamily="Liberation Sans">XYZ</text>
          <path d="M76 106h4v6" stroke="#f00" strokeDasharray="1.500 1" />
          <path d="M73.500 112.500h11v10.500h-11zM73 116h12M73 119.500h12" fill="#ffef6a" stroke="#f00" strokeWidth="1.200" />
          <path d="M93.500 102.500h18v13l-6 6h-12z" fill="#f6f6f6" stroke="#909090" /><path d="M96 106h13M96 109.500h13M96 113h13M96 116.500h8" stroke="#b5c0cc" /><path d="M105.500 121.500v-6h6z" fill="#ccc" stroke="#777" />
          <path d="M122.600 102.600h19v19h-19z" stroke="#f00" strokeWidth="1.200" fill="#f4eeee" />
          <path d="M150.600 105.600h21v13h-21z" stroke="#f00" strokeWidth="1.200" fill="#ffef5a" /><text x="152" y="115.300" fontSize="9" fontWeight="700" textLength="18" fill="#000" fontFamily="DejaVu Sans Mono">A:B</text>
          <path d="M179 116h22" stroke="#f00" strokeWidth="2" /><path d="M182 108h15M191 104l6 4-6 4" stroke="#f00" strokeWidth="1.200" />
          <path d="M208 116h22" stroke="#f00" strokeWidth="2" /><path d="M211 108h10" stroke="#f00" strokeWidth="1.500" /><path d="M219 103.500v9l8-4.500z" fill="#f00" />
        </Svg>
      </div>
      <div className="flex h-[845px] shrink-0">
        <LeftDocks />
        <Editor />
      </div>
      <div className="flex h-[35px] shrink-0 items-start pt-[2px]">
        <div className={`flex h-[32px] w-[57px] shrink-0 items-center pl-[2px] pt-px ${well}`}><Fit className="w-[52px]">Ready.</Fit></div>
        <div className={`ml-[843px] flex h-[32px] w-[843px] shrink-0 items-center justify-end pt-px ${well}`}>
          <Fit className="mr-[9px] w-[45px]">132%</Fit>
          <div className={`flex h-[30px] w-[99px] items-center pl-[9px] ${raised}`}>
            <Fit className="w-[20px]">Fit</Fit>
            <span className="ml-[7px] h-[18px] w-px bg-[#a0a0a0]" />
            <Fit className="ml-[10px] w-[44px]">100%</Fit>
          </div>
        </div>
        <div className={`ml-[3px] flex h-[32px] w-[33px] shrink-0 items-center pl-[6px] pt-px ${well}`}><ZoomGlass /></div>
        <div className={`ml-[3px] flex h-[32px] w-[104px] shrink-0 items-center px-px ${well}`}>
          <span className="h-[2px] w-[20px] border-b border-white bg-[#8a8a8a]" />
          <span className={`h-[30px] w-[16px] ${raised}`} />
          <span className="h-[2px] flex-1 border-b border-white bg-[#8a8a8a]" />
        </div>
        <div className={`ml-[2px] flex h-[32px] w-[32px] shrink-0 items-center pl-[6px] pt-px ${well}`}><ZoomGlass plus /></div>
      </div>
      <Taskbar />
    </div>
  );
}
